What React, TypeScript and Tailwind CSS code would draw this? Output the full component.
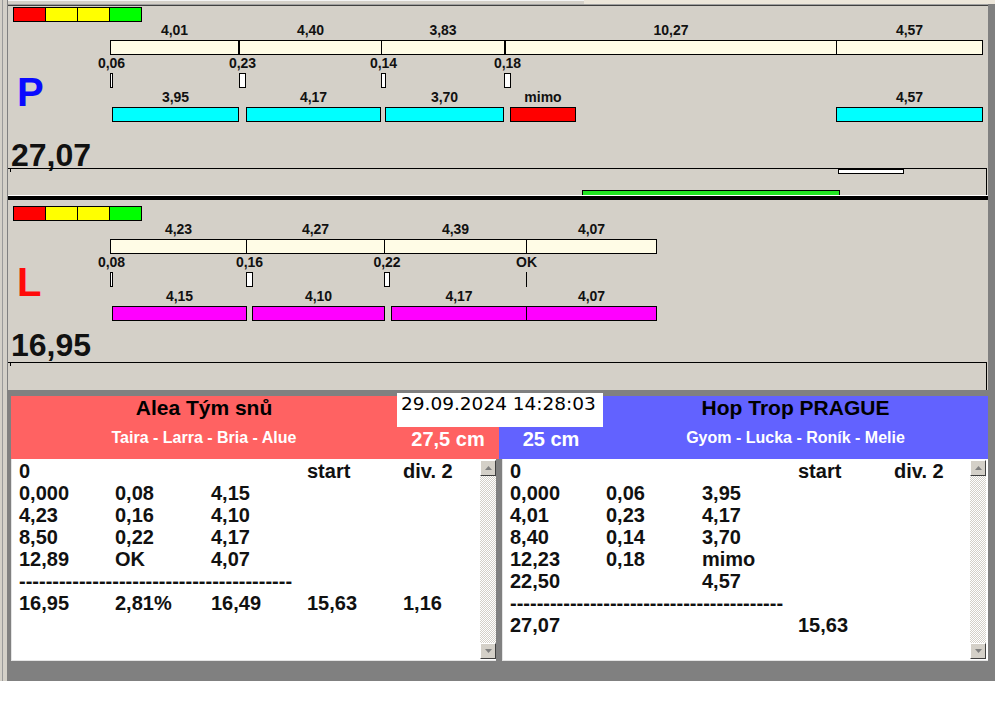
import React from "react";

const PX = 8;
type Item = { x0: number; x1: number; label: string; cls?: string; line?: boolean };

const creamP: Item[] = [
  { x0: 110, x1: 238, label: "4,01" },
  { x0: 239, x1: 381, label: "4,40" },
  { x0: 381, x1: 504, label: "3,83" },
  { x0: 505, x1: 836, label: "10,27" },
  { x0: 836, x1: 982, label: "4,57" },
];
const markP: Item[] = [
  { x0: 110, x1: 112, label: "0,06" },
  { x0: 239, x1: 245, label: "0,23" },
  { x0: 381, x1: 385, label: "0,14" },
  { x0: 504, x1: 510, label: "0,18" },
];
const barsP: Item[] = [
  { x0: 112, x1: 238, label: "3,95", cls: "bg-[#00ffff]" },
  { x0: 246, x1: 380, label: "4,17", cls: "bg-[#00ffff]" },
  { x0: 385, x1: 503, label: "3,70", cls: "bg-[#00ffff]" },
  { x0: 510, x1: 575, label: "mimo", cls: "bg-[#ff0000]" },
  { x0: 836, x1: 982, label: "4,57", cls: "bg-[#00ffff]" },
];
const creamL: Item[] = [
  { x0: 110, x1: 246, label: "4,23" },
  { x0: 246, x1: 384, label: "4,27" },
  { x0: 384, x1: 526, label: "4,39" },
  { x0: 526, x1: 656, label: "4,07" },
];
const markL: Item[] = [
  { x0: 110, x1: 112, label: "0,08" },
  { x0: 246, x1: 252, label: "0,16" },
  { x0: 384, x1: 389, label: "0,22" },
  { x0: 526, x1: 526, label: "OK", line: true },
];
const barsL: Item[] = [
  { x0: 112, x1: 246, label: "4,15", cls: "bg-[#ff00ff]" },
  { x0: 252, x1: 384, label: "4,10", cls: "bg-[#ff00ff]" },
  { x0: 391, x1: 526, label: "4,17", cls: "bg-[#ff00ff]" },
  { x0: 526, x1: 656, label: "4,07", cls: "bg-[#ff00ff]" },
];

function Labels({ items, mt }: { items: Item[]; mt: string }) {
  return (
    <div className={`relative h-[16px] shrink-0 ${mt}`}>
      {items.map((it, i) => (
        <span
          key={i}
          className="absolute top-0 -translate-x-1/2 whitespace-nowrap text-[14px] leading-[16px] font-bold text-[#111]"
          style={{ left: (it.x0 + it.x1 + 1) / 2 - PX }}
        >
          {it.label}
        </span>
      ))}
    </div>
  );
}

function Boxes({ items, mt, fill }: { items: Item[]; mt: string; fill: string }) {
  return (
    <div className={`relative h-[15px] shrink-0 ${mt}`}>
      {items.map((it, i) =>
        it.line ? (
          <div key={i} className="absolute top-0 h-[15px] w-[1px] bg-black" style={{ left: it.x0 - PX }} />
        ) : (
          <div
            key={i}
            className={`absolute top-0 h-[15px] border border-black ${it.cls ?? fill}`}
            style={{ left: it.x0 - PX, width: it.x1 - it.x0 + 1 }}
          />
        )
      )}
    </div>
  );
}

function ColorBar({ mt }: { mt: string }) {
  return (
    <div className={`ml-[5px] flex shrink-0 ${mt}`}>
      <div className="h-[15px] w-[33px] border border-black bg-[#ff0000]" />
      <div className="-ml-px h-[15px] w-[33px] border border-black bg-[#ffff00]" />
      <div className="-ml-px h-[15px] w-[33px] border border-black bg-[#ffff00]" />
      <div className="-ml-px h-[15px] w-[33px] border border-black bg-[#00ff00]" />
    </div>
  );
}

function Chart({
  letter,
  letterCls,
  letterTop,
  total,
  cream,
  marks,
  bars,
  m,
}: {
  letter: string;
  letterCls: string;
  letterTop: string;
  total: string;
  cream: Item[];
  marks: Item[];
  bars: Item[];
  m: string[];
}) {
  return (
    <div className="relative flex h-[162px] flex-col">
      <ColorBar mt={m[0]} />
      <Labels items={cream} mt="mt-0" />
      <Boxes items={cream} mt="mt-[2px]" fill="bg-[#fffce6]" />
      <Labels items={marks} mt="mt-0" />
      <Boxes items={marks} mt="mt-[2px]" fill="bg-white" />
      <Labels items={bars} mt="mt-[1px]" />
      <Boxes items={bars} mt="mt-[2px]" fill="bg-white" />
      <div className={`ml-[3px] shrink-0 text-[32px] leading-[32px] font-bold text-[#111] ${m[1]}`}>{total}</div>
      <div className={`absolute left-[9px] text-[40px] leading-[40px] font-bold ${letterTop} ${letterCls}`}>{letter}</div>
    </div>
  );
}

function ScrollBtn({ up }: { up?: boolean }) {
  return (
    <div className="flex h-[16px] w-[16px] shrink-0 items-center justify-center border border-t-white border-l-white border-r-[#404040] border-b-[#404040] bg-[#d4d0c8]">
      <svg width="7" height="4" viewBox="0 0 7 4">
        {up ? <path d="M3.5 0 L7 4 L0 4 Z" fill="#808080" /> : <path d="M0 0 L7 0 L3.5 4 Z" fill="#808080" />}
      </svg>
    </div>
  );
}

function ScrollBar() {
  return (
    <div className="flex w-[16px] shrink-0 flex-col py-[1px]">
      <ScrollBtn up />
      <div className="flex-1 bg-[image:repeating-conic-gradient(#d4d0c8_0%_25%,#ffffff_0%_50%)] bg-[length:2px_2px]" />
      <ScrollBtn />
    </div>
  );
}

const DASH = "-----------------------------------------";

function List({ rows, w, ml }: { rows: (string[] | null)[]; w: string; ml: string }) {
  return (
    <div className={`flex h-[202px] border-l border-b border-[#e4e4e4] bg-white ${w} ${ml}`}>
      <div className="min-w-0 flex-1 overflow-hidden pl-[7px] pt-[1px] text-[20px] leading-[22px] font-bold text-[#111]">
        {rows.map((r, i) =>
          r === null ? (
            <div key={i} className="h-[22px] whitespace-nowrap">{DASH}</div>
          ) : (
            <div key={i} className="grid h-[22px] grid-cols-[96px_96px_96px_96px_96px] whitespace-nowrap">
              {[0, 1, 2, 3, 4].map((c) => (
                <span key={c}>{r[c] ?? ""}</span>
              ))}
            </div>
          )
        )}
      </div>
      <ScrollBar />
    </div>
  );
}

const leftRows: (string[] | null)[] = [
  ["0", "", "", "start", "div. 2"],
  ["0,000", "0,08", "4,15"],
  ["4,23", "0,16", "4,10"],
  ["8,50", "0,22", "4,17"],
  ["12,89", "OK", "4,07"],
  null,
  ["16,95", "2,81%", "16,49", "15,63", "1,16"],
];
const rightRows: (string[] | null)[] = [
  ["0", "", "", "start", "div. 2"],
  ["0,000", "0,06", "3,95"],
  ["4,01", "0,23", "4,17"],
  ["8,40", "0,14", "3,70"],
  ["12,23", "0,18", "mimo"],
  ["22,50", "", "4,57"],
  null,
  ["27,07", "", "", "15,63"],
];

export default function App() {
  return (
    <div className="h-[716px] w-[995px] bg-white font-['Liberation_Sans',Arial,sans-serif]">
      <div className="flex h-[681px] w-[995px]">
        {/* left frame */}
        <div className="flex h-full w-[8px] shrink-0">
          <div className="w-[2px] bg-[#d4d0c8]" />
          <div className="w-[1px] bg-[#9a9a9a]" />
          <div className="w-[4px] bg-[#d4d0c8]" />
          <div className="w-[1px] bg-[#808080]" />
        </div>
        {/* main */}
        <div className="flex w-[987px] flex-col bg-[#808080]">
          <div className="flex h-[4px] w-full shrink-0">
            <div className="w-[576px] border-t border-[#f4f4f4] bg-[#d4d0c8]" />
            <div className="flex-1 bg-[#ece6da]" />
          </div>
          <div className="h-[1px] w-[980px] shrink-0 bg-[#a0a0a0]" />
          <div className="h-[1px] w-[980px] shrink-0 bg-[#404040]" />

          {/* P panel */}
          <div className="flex w-[980px] shrink-0 flex-col bg-[#d4d0c8]">
            <Chart
              letter="P"
              letterCls="text-[#0a0aff]"
              letterTop="top-[66px]"
              total="27,07"
              cream={creamP}
              marks={markP}
              bars={barsP}
              m={["mt-[1px]", "mt-[17px]"]}
            />
            <div className="relative h-[27px] w-[979px] border-t border-r border-black">
              <div className="absolute left-[2px] top-0 h-[3px] w-[1px] bg-black" />
              <div className="absolute left-[830px] top-0 h-[5px] w-[66px] border border-black bg-white" />
              <div className="absolute bottom-0 left-[574px] h-[5px] w-[258px] border border-b-0 border-black bg-[#22e622]" />
            </div>
            <div className="h-[1px] w-full bg-white" />
            <div className="h-[4px] w-full bg-black" />
          </div>

          {/* L panel */}
          <div className="flex w-[980px] shrink-0 flex-col bg-[#d4d0c8]">
            <Chart
              letter="L"
              letterCls="text-[#ff0a0a]"
              letterTop="top-[62px]"
              total="16,95"
              cream={creamL}
              marks={markL}
              bars={barsL}
              m={["mt-[6px]", "mt-[8px]"]}
            />
            <div className="relative h-[28px] w-[979px] border-t border-r border-black">
              <div className="absolute left-[2px] top-0 h-[3px] w-[1px] bg-black" />
            </div>
          </div>

          {/* bottom area */}
          <div className="relative flex flex-1 pt-[6px]">
            <div className="ml-[3px] flex w-[488px] flex-col">
              <div className="flex h-[63px] bg-[#ff6262]">
                <div className="flex w-[386px] flex-col items-center">
                  <div className="h-[24px] text-[21px] leading-[24px] font-bold text-black">Alea Tým snů</div>
                  <div className="mt-[8px] text-[16px] leading-[20px] font-bold text-white">Taira - Larra - Bria - Alue</div>
                </div>
                <div className="flex-1 pt-[31px] text-center text-[20px] leading-[24px] font-bold text-white">27,5 cm</div>
              </div>
              <List rows={leftRows} w="w-[485px]" ml="ml-0" />
            </div>
            <div className="flex w-[489px] flex-col">
              <div className="flex h-[63px] bg-[#6262ff]">
                <div className="w-[104px] pt-[31px] text-center text-[20px] leading-[24px] font-bold text-white">25 cm</div>
                <div className="flex flex-1 flex-col items-center">
                  <div className="h-[24px] text-[21px] leading-[24px] font-bold text-black">Hop Trop PRAGUE</div>
                  <div className="mt-[8px] text-[16px] leading-[20px] font-bold text-white">Gyom - Lucka - Roník - Melie</div>
                </div>
              </div>
              <List rows={rightRows} w="w-[486px]" ml="ml-[3px] pr-[2px]" />
            </div>
            <div className="absolute left-[389px] top-[3px] h-[34px] w-[206px] bg-white pl-[4px] font-['DejaVu_Sans',Verdana,sans-serif] text-[18.5px] leading-[22px] text-black">
              29.09.2024 14:28:03
            </div>
          </div>
        </div>
      </div>
    </div>
  );
}
